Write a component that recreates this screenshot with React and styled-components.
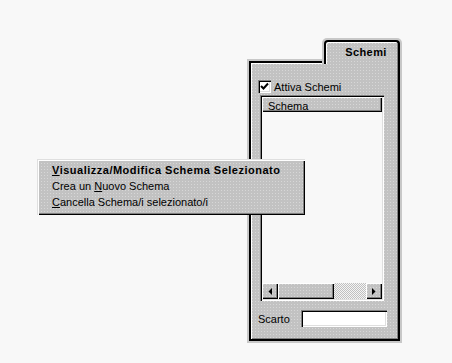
import styled, { createGlobalStyle, css } from 'styled-components';

const GlobalStyle = createGlobalStyle`
  html, body {
    margin: 0;
    background: #f8f8f8;
  }
  body {
    font-family: 'Liberation Sans', Arial, sans-serif;
    font-size: 11px;
    color: #000;
  }
`;

const dither = css`
  background-color: #c2c2c2;
  background-image: radial-gradient(rgba(255, 255, 255, 0.35) 0.7px, transparent 0.8px);
  background-size: 3px 3px;
`;

const raised = css`
  box-shadow: inset 1px 1px #fff, inset -1px -1px #000, inset -2px -2px #808080;
`;

const sunken = css`
  box-shadow: inset 1px 1px #808080, inset 2px 2px #000, inset -1px -1px #fff, inset -2px -2px #dfdfdf;
`;

const Page = styled.div`
  position: relative;
  width: 452px;
  height: 363px;
  box-sizing: border-box;
  padding: 38px 0 0 247px;
`;

const Dock = styled.div`
  width: 155px;
  display: flex;
  flex-direction: column;
`;

const TabRow = styled.div`
  height: 21px;
  display: flex;
  justify-content: flex-end;
`;

const TabOuter = styled.div`
  position: relative;
  z-index: 1;
  width: 80px;
  height: 26px;
  box-sizing: border-box;
  padding: 2px 2px 0 2px;
  background: #c8c8c8;
  border-radius: 5px 5px 0 0;
`;

const Tab = styled.div`
  ${dither};
  height: 100%;
  box-sizing: border-box;
  border: 2px solid #000;
  border-bottom: none;
  border-radius: 4px 4px 0 0;
  box-shadow: inset 1px 1px #fff, inset -1px 0 #808080;
  display: flex;
  justify-content: center;
  padding: 4px 0 0 8px;
  font-weight: bold;
  letter-spacing: 0.4px;
`;

const PanelOuter = styled.div`
  height: 284px;
  box-sizing: border-box;
  padding: 2px;
  background: #c8c8c8;
`;

const Frame = styled.div`
  ${dither};
  height: 100%;
  box-sizing: border-box;
  border: 2px solid #000;
  box-shadow: inset 1px 1px #fff, inset -1px -1px #808080;
  padding: 17px 0 0 7px;
  display: flex;
  flex-direction: column;
`;

const CheckRow = styled.label`
  height: 13px;
  display: flex;
  align-items: center;
  gap: 3px;
`;

const CheckBox = styled.span`
  width: 13px;
  height: 13px;
  flex: none;
  background: #fff;
  ${sunken};
  display: flex;
  align-items: center;
  justify-content: center;
`;

const ListView = styled.div`
  width: 124px;
  height: 206px;
  margin: 2px 0 0 2px;
  box-sizing: border-box;
  padding: 2px;
  background: #f8f8f8;
  ${sunken};
  display: flex;
  flex-direction: column;
`;

const Header = styled.div`
  ${dither};
  ${raised};
  height: 15px;
  flex: none;
  box-sizing: border-box;
  padding: 2px 0 0 6px;
  display: flex;
  align-items: center;
`;

const ListBody = styled.div`
  flex: 1;
`;

const ScrollBar = styled.div`
  height: 16px;
  display: flex;
`;

const ScrollButton = styled.div`
  ${dither};
  ${raised};
  width: 16px;
  height: 16px;
  display: flex;
  align-items: center;
  justify-content: center;
`;

const Thumb = styled.div`
  ${dither};
  ${raised};
  width: 56px;
`;

const Track = styled.div`
  flex: 1;
  background: repeating-conic-gradient(#c0c0c0 0 25%, #f4f4f4 0 50%) 0 0 / 2px 2px;
`;

const FieldRow = styled.div`
  margin-top: 9px;
  height: 17px;
  display: flex;
  align-items: center;
  gap: 11px;
`;

const Input = styled.div`
  width: 86px;
  height: 17px;
  background: #fff;
  ${sunken};
`;

const Menu = styled.div`
  ${dither};
  position: absolute;
  left: 37px;
  top: 159px;
  width: 268px;
  height: 56px;
  box-sizing: border-box;
  padding: 3px 2px;
  box-shadow: inset 1px 1px #dfdfdf, inset 2px 2px #fff, inset -1px -1px #000, inset -2px -2px #808080;
  z-index: 5;
`;

const MenuItem = styled.div`
  height: 16px;
  display: flex;
  align-items: center;
  padding-left: 13px;
  font-weight: ${(p) => (p.$default ? 'bold' : 'normal')};
  letter-spacing: ${(p) => (p.$default ? '0.5px' : '0')};
  white-space: nowrap;
`;

const Key = styled.span`
  text-decoration: underline;
`;

const Arrow = ({ dir }) => (
  <svg width="4" height="7" viewBox="0 0 4 7">
    <polygon points={dir === 'left' ? '4,0 4,7 0.5,3.5' : '0,0 0,7 3.5,3.5'} fill="#000" />
  </svg>
);

const App = () => {
  return (
    <Page>
      <GlobalStyle />
      <Dock>
        <TabRow>
          <TabOuter>
            <Tab>Schemi</Tab>
          </TabOuter>
        </TabRow>
        <PanelOuter>
          <Frame>
            <CheckRow>
              <CheckBox>
                <svg width="9" height="9" viewBox="0 0 9 9">
                  <path d="M1 4 L3.5 6.5 L8 1.5" stroke="#000" strokeWidth="2" fill="none" />
                </svg>
              </CheckBox>
              Attiva Schemi
            </CheckRow>
            <ListView>
              <Header>Schema</Header>
              <ListBody />
              <ScrollBar>
                <ScrollButton>
                  <Arrow dir="left" />
                </ScrollButton>
                <Thumb />
                <Track />
                <ScrollButton>
                  <Arrow dir="right" />
                </ScrollButton>
              </ScrollBar>
            </ListView>
            <FieldRow>
              Scarto
              <Input />
            </FieldRow>
          </Frame>
        </PanelOuter>
      </Dock>

      <Menu>
        <MenuItem $default>
          <span>
            <Key>V</Key>isualizza/Modifica Schema Selezionato
          </span>
        </MenuItem>
        <MenuItem>
          <span>
            Crea un <Key>N</Key>uovo Schema
          </span>
        </MenuItem>
        <MenuItem>
          <span>
            <Key>C</Key>ancella Schema/i selezionato/i
          </span>
        </MenuItem>
      </Menu>
    </Page>
  );
};

export default App;
